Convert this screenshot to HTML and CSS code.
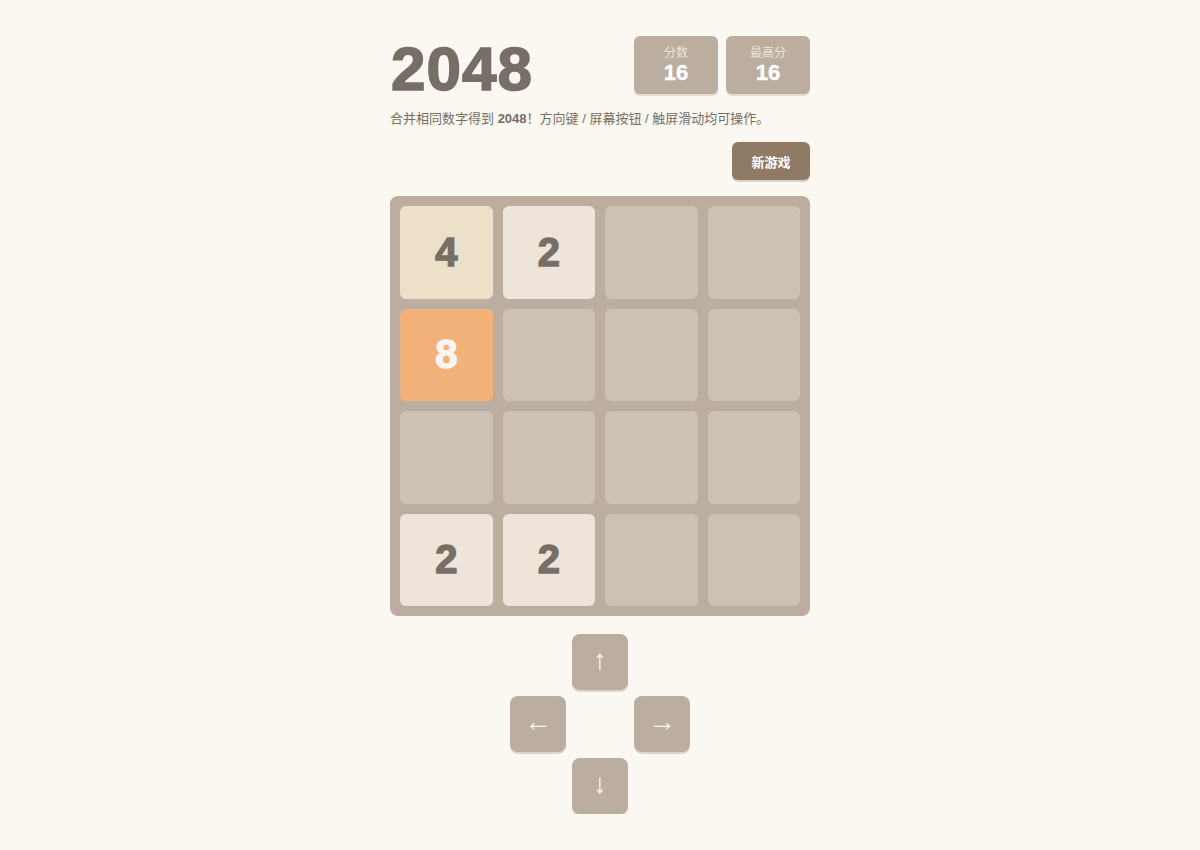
FILE: index.html
```html
<!DOCTYPE html>
<html lang="zh">
<head>
<meta charset="utf-8">
<title>2048</title>
<link rel="stylesheet" href="styles.css">
</head>
<body>
<div class="wrap">
  <div class="header">
    <h1 class="title">2048</h1>
    <div class="scores">
      <div class="score-box"><div class="score-label">分数</div><div class="score-value">16</div></div>
      <div class="score-box"><div class="score-label">最高分</div><div class="score-value">16</div></div>
    </div>
  </div>
  <p class="intro">合并相同数字得到 <b>2048</b>！方向键 / 屏幕按钮 / 触屏滑动均可操作。</p>
  <div class="actions"><button class="new-game">新游戏</button></div>
  <div class="board">
    <div class="tile t4">4</div>
    <div class="tile t2">2</div>
    <div class="tile"></div>
    <div class="tile"></div>
    <div class="tile t8">8</div>
    <div class="tile"></div>
    <div class="tile"></div>
    <div class="tile"></div>
    <div class="tile"></div>
    <div class="tile"></div>
    <div class="tile"></div>
    <div class="tile"></div>
    <div class="tile t2">2</div>
    <div class="tile t2">2</div>
    <div class="tile"></div>
    <div class="tile"></div>
  </div>
  <div class="controls">
    <button class="ctl up">↑</button>
    <button class="ctl left">←</button>
    <button class="ctl right">→</button>
    <button class="ctl down">↓</button>
  </div>
</div>
</body>
</html>
```
FILE: styles.css
```css
html, body {
  margin: 0;
  padding: 0;
  background: #faf8f0;
}
body {
  font-family: "Liberation Sans", "Noto Sans CJK SC", Arial, sans-serif;
  color: #776e65;
}
.wrap {
  width: 420px;
  margin: 36px auto 0;
}
.header {
  display: flex;
  justify-content: space-between;
  align-items: flex-start;
  height: 60px;
}
.title {
  margin: 1px 0 0 1px;
  font-size: 62px;
  line-height: 64px;
  font-weight: 700;
  letter-spacing: 1px;
  color: #776e65;
  -webkit-text-stroke: 1.6px #776e65;
}
.scores {
  display: flex;
  gap: 8px;
}
.score-box {
  width: 84px;
  height: 58px;
  background: #bbada0;
  border-radius: 6px;
  box-shadow: 0 2px 0 #e2dbd2;
  text-align: center;
  box-sizing: border-box;
  padding-top: 10px;
}
.score-label {
  font-size: 12px;
  line-height: 14px;
  color: #eee4da;
}
.score-value {
  margin-top: 1px;
  font-size: 22px;
  line-height: 24px;
  font-weight: 700;
  color: #fff;
  -webkit-text-stroke: 0.4px #fff;
}
.intro {
  margin: 14px 0 0;
  font-size: 13px;
  line-height: 18px;
  color: #776e65;
}
.intro b {
  font-weight: 700;
}
.actions {
  display: flex;
  justify-content: flex-end;
  margin-top: 14px;
}
.new-game {
  border: 0;
  background: #8f7a66;
  color: #fff;
  font-family: "Liberation Sans", "Noto Sans CJK SC", sans-serif;
  font-weight: 700;
  font-size: 13px;
  width: 78px;
  height: 38px;
  border-radius: 6px;
  box-shadow: 0 2px 0 #d9d0c6;
  padding: 0;
}
.board {
  margin-top: 16px;
  width: 420px;
  height: 420px;
  box-sizing: border-box;
  padding: 10px;
  background: #bbada0;
  border-radius: 8px;
  display: grid;
  grid-template-columns: repeat(4, 1fr);
  grid-template-rows: repeat(4, 1fr);
  gap: 10px;
}
.tile {
  background: #cdc1b4;
  border-radius: 6px;
  display: flex;
  align-items: center;
  justify-content: center;
  font-size: 40px;
  font-weight: 700;
  color: #776e65;
  -webkit-text-stroke: 1.4px #776e65;
}
.t2 { background: #eee4da; }
.t4 { background: #ede0c8; }
.t8 { background: #f2b179; color: #f9f6f2; -webkit-text-stroke-color: #f9f6f2; }
.controls {
  margin: 18px auto 0;
  width: 180px;
  display: grid;
  grid-template-columns: 56px 56px 56px;
  grid-template-rows: 56px 56px 56px;
  gap: 6px;
}
.ctl {
  border: 0;
  padding: 0 0 5px;
  background: #bbada0;
  color: #f9f6f2;
  border-radius: 8px;
  box-shadow: 0 2px 0 #ddd5cc;
  font-family: "Liberation Sans", sans-serif;
  font-size: 28px;
  line-height: 50px;
}
.up { grid-column: 2; grid-row: 1; }
.left { grid-column: 1; grid-row: 2; }
.right { grid-column: 3; grid-row: 2; }
.down { grid-column: 2; grid-row: 3; }
```
